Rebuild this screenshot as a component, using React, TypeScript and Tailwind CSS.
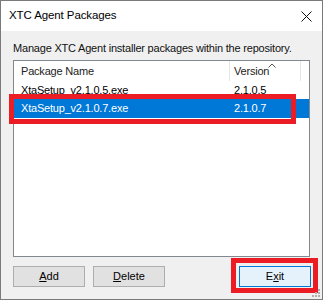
import React from "react";

const font = { fontFamily: '"Liberation Sans", Arial, sans-serif' };

function Btn({ label, u, def }: { label: string; u: number; def?: boolean }) {
  return (
    <div
      className={
        "flex h-[21px] w-[72px] items-center justify-center border text-[11px] text-black " +
        (def ? "border-[#0078d7] bg-[#e5f1fb]" : "border-[#adadad] bg-[#e1e1e1]")
      }
    >
      <span>
        {label.slice(0, u)}
        <span className="underline">{label[u]}</span>
        {label.slice(u + 1)}
      </span>
    </div>
  );
}

export default function App() {
  return (
    <div
      className="relative flex h-[300px] w-[323px] flex-col overflow-hidden border border-[#7a7a7a] bg-[#f0f0f0]"
      style={font}
    >
      <div className="flex h-[30px] shrink-0 items-center justify-between bg-white pl-[8px] pr-[10px]">
        <span className="text-[11.5px] tracking-[-0.1px] text-black">XTC Agent Packages</span>
        <svg width="11" height="11" viewBox="0 0 11 11">
          <path d="M0.5 0.5 L10.5 10.5 M10.5 0.5 L0.5 10.5" stroke="#111" strokeWidth="1" />
        </svg>
      </div>
      <div className="flex flex-1 flex-col px-[12px] pt-[10px]">
        <div className="mb-[5px] h-[14px] whitespace-nowrap text-[11px] leading-[14px] tracking-[-0.2px] text-[#111]">
          Manage XTC Agent installer packages within the repository.
        </div>
        <div className="h-[197px] border border-[#828790] bg-white text-[11px] tracking-[-0.2px]">
          <div className="relative flex h-[20px] text-[#222]">
            <div className="flex w-[216px] items-center border-r border-[#e5e5e5] pl-[7px]">Package Name</div>
            <div className="flex w-[71px] items-center border-r border-[#e5e5e5] pl-[4px]">Version</div>
            <svg className="absolute left-[254px] top-[2px]" width="8" height="5" viewBox="0 0 8 5">
              <path d="M0.5 4.5 L4 1 L7.5 4.5" stroke="#555" strokeWidth="1" fill="none" />
            </svg>
          </div>
          <div className="flex h-[18px] items-center text-black">
            <div className="w-[217px] pl-[7px]">XtaSetup_v2.1.0.5.exe</div>
            <div className="pl-[3px]">2.1.0.5</div>
          </div>
          <div className="flex h-[19px] items-center bg-[#0078d7] text-white">
            <div className="w-[217px] pl-[7px]">XtaSetup_v2.1.0.7.exe</div>
            <div className="pl-[3px]">2.1.0.7</div>
          </div>
        </div>
        <div className="mt-[9px] flex items-center">
          <Btn label="Add" u={0} />
          <div className="ml-[8px]">
            <Btn label="Delete" u={0} />
          </div>
          <div className="ml-auto -mr-[1px]">
            <Btn label="Exit" u={1} def />
          </div>
        </div>
      </div>
      <div className="absolute left-[8px] top-[93px] h-[30px] w-[287px] border-[5px] border-[#ec1c24]" />
      <div className="absolute left-[230px] top-[257px] h-[35px] w-[87px] border-[5px] border-[#ec1c24]" />
      <svg className="absolute bottom-[1px] right-[1px]" width="9" height="9" viewBox="0 0 9 9">
        <rect x="6" y="0" width="2" height="2" fill="#b0b0b0" />
        <rect x="3" y="3" width="2" height="2" fill="#b0b0b0" />
        <rect x="6" y="3" width="2" height="2" fill="#b0b0b0" />
        <rect x="0" y="6" width="2" height="2" fill="#b0b0b0" />
        <rect x="3" y="6" width="2" height="2" fill="#b0b0b0" />
        <rect x="6" y="6" width="2" height="2" fill="#b0b0b0" />
      </svg>
    </div>
  );
}
